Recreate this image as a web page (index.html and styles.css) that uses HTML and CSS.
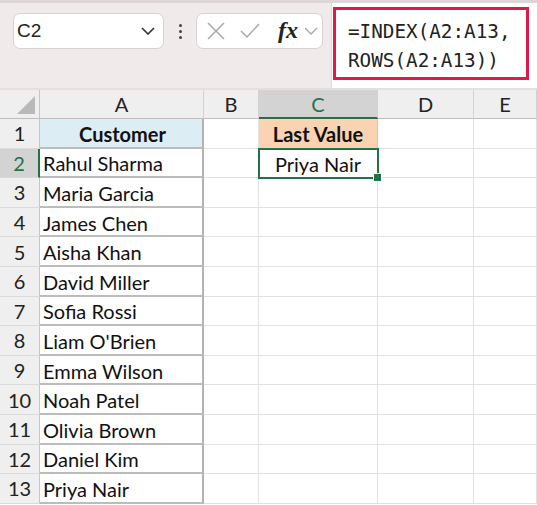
FILE: index.html
```html
<!DOCTYPE html>
<html lang="en">
  <head>
    <title>Last Value</title>
    <meta charset="UTF-8">
    <link rel="stylesheet" href="styles.css">
  </head>
  <body>
    <div class="topbar">
      <div class="namebox">
        <span class="cellref">C2</span>
        <svg class="chev" width="14" height="8" viewBox="0 0 14 8"><path d="M1 1 L7 7 L13 1" fill="none" stroke="#333" stroke-width="1.6"/></svg>
      </div>
      <div class="dots"><i></i><i></i><i></i></div>
      <div class="fxbox">
        <svg width="18" height="18" viewBox="0 0 18 18"><path d="M1 1 L17 17 M17 1 L1 17" stroke="#a9a9a9" stroke-width="1.5" fill="none"/></svg>
        <svg class="tick" width="20" height="16" viewBox="0 0 20 16"><path d="M1 8 L7 14 L19 1" stroke="#a9a9a9" stroke-width="1.5" fill="none"/></svg>
        <span class="fx">fx</span>
        <svg class="chev2" width="14" height="8" viewBox="0 0 14 8"><path d="M1 1 L7 7 L13 1" fill="none" stroke="#a9a9a9" stroke-width="1.4"/></svg>
      </div>
      <div class="formulabar">
        <div class="formula">=INDEX(A2:A13,<br>ROWS(A2:A13))</div>
      </div>
    </div>

    <div class="sheet">
      <div class="hd corner"><span class="tri"></span></div>
      <div class="hd">A</div>
      <div class="hd">B</div>
      <div class="hd active">C</div>
      <div class="hd">D</div>
      <div class="hd">E</div>

      <div class="rn">1</div>
      <div class="c tbl head">Customer</div>
      <div class="c"></div>
      <div class="c peach">Last Value</div>
      <div class="c"></div>
      <div class="c"></div>

      <div class="rn active">2</div>
      <div class="c tbl">Rahul Sharma</div>
      <div class="c"></div>
      <div class="c sel">Priya Nair</div>
      <div class="c"></div>
      <div class="c"></div>

      <div class="rn">3</div>
      <div class="c tbl">Maria Garcia</div>
      <div class="c"></div><div class="c"></div><div class="c"></div><div class="c"></div>

      <div class="rn">4</div>
      <div class="c tbl">James Chen</div>
      <div class="c"></div><div class="c"></div><div class="c"></div><div class="c"></div>

      <div class="rn">5</div>
      <div class="c tbl">Aisha Khan</div>
      <div class="c"></div><div class="c"></div><div class="c"></div><div class="c"></div>

      <div class="rn">6</div>
      <div class="c tbl">David Miller</div>
      <div class="c"></div><div class="c"></div><div class="c"></div><div class="c"></div>

      <div class="rn">7</div>
      <div class="c tbl">Sofia Rossi</div>
      <div class="c"></div><div class="c"></div><div class="c"></div><div class="c"></div>

      <div class="rn">8</div>
      <div class="c tbl">Liam O'Brien</div>
      <div class="c"></div><div class="c"></div><div class="c"></div><div class="c"></div>

      <div class="rn">9</div>
      <div class="c tbl">Emma Wilson</div>
      <div class="c"></div><div class="c"></div><div class="c"></div><div class="c"></div>

      <div class="rn">10</div>
      <div class="c tbl">Noah Patel</div>
      <div class="c"></div><div class="c"></div><div class="c"></div><div class="c"></div>

      <div class="rn">11</div>
      <div class="c tbl">Olivia Brown</div>
      <div class="c"></div><div class="c"></div><div class="c"></div><div class="c"></div>

      <div class="rn">12</div>
      <div class="c tbl">Daniel Kim</div>
      <div class="c"></div><div class="c"></div><div class="c"></div><div class="c"></div>

      <div class="rn">13</div>
      <div class="c tbl">Priya Nair</div>
      <div class="c"></div><div class="c"></div><div class="c"></div><div class="c"></div>
    </div>
  </body>
</html>
```

FILE: styles.css
```css
* { box-sizing: border-box; }
html, body { margin: 0; padding: 0; background: #fff; }
body
{
    width: 537px;
    height: 505px;
    overflow: hidden;
    font-family: Lato, "Liberation Sans", sans-serif;
    color: #111;
}

/* formula bar strip */
.topbar
{
    display: flex;
    align-items: flex-start;
    height: 90px;
    background: #f0eaeb;
    border-top: 3px solid #dcd6d7;
    border-bottom: 2px solid #e4dfe0;
}
.namebox
{
    display: flex;
    align-items: center;
    justify-content: space-between;
    margin: 10px 0 0 13px;
    width: 151px;
    height: 36px;
    padding: 0 8px 0 3px;
    background: #fff;
    border: 1px solid #d6d1d2;
    border-radius: 7px;
}
.cellref
{
    font-family: "Liberation Sans", Arial, sans-serif;
    font-size: 19px;
    color: #222;
}
.dots
{
    display: flex;
    flex-direction: column;
    align-items: center;
    gap: 3px;
    width: 32px;
    margin-top: 21px;
}
.dots i
{
    display: block;
    width: 3px;
    height: 3px;
    border-radius: 50%;
    background: #444;
}
.fxbox
{
    display: flex;
    align-items: center;
    margin-top: 10px;
    width: 127px;
    height: 36px;
    padding: 0 0 0 10px;
    background: #fff;
    border: 1px solid #d6d1d2;
    border-radius: 7px;
}
.fxbox .tick { margin-left: 15px; }
.fx
{
    margin-left: 18px;
    font-family: "Liberation Serif", serif;
    font-style: italic;
    font-weight: bold;
    font-size: 24px;
    color: #222;
    line-height: 1;
    padding-bottom: 3px;
}
.fxbox .chev2 { margin-left: 6px; }
.formulabar
{
    flex: 1;
    align-self: stretch;
    margin-left: 8px;
    padding: 4px 0 0 1px;
    background: #fff;
    border-left: 1px solid #ddd8d9;
}
.formula
{
    width: 196px;
    height: 73px;
    padding: 7px 0 0 12px;
    border: 3px solid #e0194b;
    font-family: "DejaVu Sans Mono", "Liberation Mono", monospace;
    font-size: 19.3px;
    line-height: 29px;
    color: #222;
}

/* grid */
.sheet
{
    display: grid;
    grid-template-columns: 40px 164px 55px 119px 96px 63px;
    grid-template-rows: 29px repeat(13, 29.6px);
    font-size: 20px;
}
.hd
{
    display: flex;
    align-items: center;
    justify-content: center;
    background: #efefef;
    border-right: 1px solid #d2d2d2;
    border-bottom: 1px solid #bdbdbd;
    color: #222;
}
.hd.active
{
    background: #d3d3d3;
    color: #217346;
    border-bottom: 2px solid #217346;
}
.corner
{
    position: relative;
    border-right: 1px solid #c6c6c6;
}
.corner .tri
{
    position: absolute;
    right: 4px;
    bottom: 4px;
    width: 0;
    height: 0;
    border-left: 18px solid transparent;
    border-bottom: 18px solid #b9b9b9;
}
.rn
{
    display: flex;
    align-items: center;
    justify-content: center;
    background: #efefef;
    border-right: 1px solid #c6c6c6;
    border-bottom: 1px solid #dadada;
    color: #222;
}
.rn.active
{
    background: #d3d3d3;
    color: #217346;
    border-right: 2px solid #217346;
}
.c
{
    display: flex;
    align-items: center;
    justify-content: center;
    padding-top: 2px;
    border-right: 1px solid #e1e1e1;
    border-bottom: 1px solid #e1e1e1;
    white-space: nowrap;
}
.c.tbl
{
    justify-content: flex-start;
    padding-left: 3px;
    border-right: 2px solid #b3b3b3;
    border-bottom: 2px solid #bcbcbc;
}
.c.head
{
    justify-content: center;
    background: #dcedf3;
    font-weight: bold;
}
.c.peach
{
    background: #f9d3b2;
    font-weight: bold;
    border-right: 1px solid #c9c9c9;
}
.c.sel { position: relative; }
.c.sel::before
{
    content: "";
    position: absolute;
    left: -1px;
    top: -1px;
    right: -2px;
    bottom: -2px;
    border: 2px solid #217346;
}
.c.sel::after
{
    content: "";
    position: absolute;
    right: -5px;
    bottom: -5px;
    width: 7px;
    height: 7px;
    background: #217346;
    border: 1px solid #fff;
}
```
